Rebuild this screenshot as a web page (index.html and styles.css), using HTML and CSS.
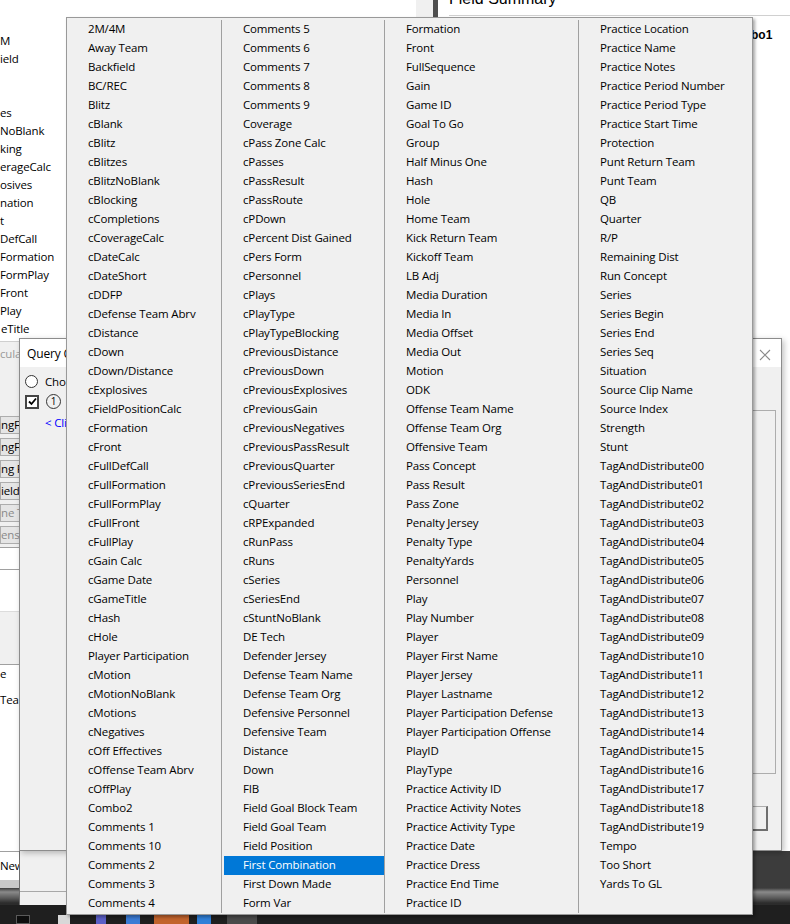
FILE: index.html
```html
<!DOCTYPE html>
<html>
<head>
<meta charset="utf-8">
<link rel="stylesheet" href="styles.css">
</head>
<body>
<div class="app">
  <div class="app-top">
    <div class="tab-grey"></div>
    <div class="tab-bar"></div>
    <div class="app-title"><span>Field Summary</span></div>
  </div>
  <div class="app-main">
    <div class="leftcol">
      <div class="bglist">
        <div>M</div><div>ield</div><div></div><div></div><div>es</div><div>NoBlank</div><div>king</div><div>erageCalc</div><div>osives</div><div>nation</div><div>t</div><div>DefCall</div><div>Formation</div><div>FormPlay</div><div>Front</div><div>Play</div><div class="cut">eTitle</div>
      </div>
      <div class="strip">
        <div class="calc">cula</div>
        <div class="fbtns">
          <div class="fbtn">ngFi</div>
          <div class="fbtn">ngFi</div>
          <div class="fbtn">ng F</div>
          <div class="fbtn">ields</div>
          <div class="fbtn dim">ne T</div>
          <div class="fbtn dim">ense</div>
        </div>
        <div class="sec white1"></div>
        <div class="sec white2"></div>
        <div class="sec grey1"></div>
        <div class="sec white3"><div class="t1">e</div><div class="t2">Tea</div></div>
      </div>
    </div>
    <div class="midcol"></div>
    <div class="rightcol"><span class="combo">bo1</span></div>
  </div>
</div>

<div class="lowstrip"><span>New</span></div>
<div class="lowpanel"></div>

<div class="dialog">
  <div class="dlg-title">
    <span>Query Calculation Builder</span>
    <svg class="dlg-close" width="12" height="12" viewBox="0 0 12 12"><path d="M1 1L11 11M11 1L1 11" stroke="#8a8a8a" stroke-width="1.1" fill="none"/></svg>
  </div>
  <div class="dlg-body">
    <div class="dlg-left">
      <div class="opt"><span class="radio"></span><span>Choose</span></div>
      <div class="opt"><span class="check"><svg width="9" height="9" viewBox="0 0 9 9"><path d="M1 4.5L3.5 7L8 1.5" stroke="#000" stroke-width="1.8" fill="none"/></svg></span><span class="circ">1</span></div>
      <div class="link">&lt; Click</div>
    </div>
    <div class="dlg-right">
      <div class="listbox"></div>
      <div class="okbtn"></div>
    </div>
  </div>
</div>

<div class="taskbar">
  <span class="ti i1"></span><span class="ti i2"></span><span class="ti i3"></span><span class="ti i4"></span><span class="ti i5"></span><span class="ti i6"></span><span class="ti i7"></span>
</div>

<div class="menu">
  <div class="mcol c1">
    <div class="mi">2M/4M</div><div class="mi">Away Team</div><div class="mi">Backfield</div><div class="mi">BC/REC</div><div class="mi">Blitz</div><div class="mi">cBlank</div><div class="mi">cBlitz</div><div class="mi">cBlitzes</div><div class="mi">cBlitzNoBlank</div><div class="mi">cBlocking</div><div class="mi">cCompletions</div><div class="mi">cCoverageCalc</div><div class="mi">cDateCalc</div><div class="mi">cDateShort</div><div class="mi">cDDFP</div><div class="mi">cDefense Team Abrv</div><div class="mi">cDistance</div><div class="mi">cDown</div><div class="mi">cDown/Distance</div><div class="mi">cExplosives</div><div class="mi">cFieldPositionCalc</div><div class="mi">cFormation</div><div class="mi">cFront</div><div class="mi">cFullDefCall</div><div class="mi">cFullFormation</div><div class="mi">cFullFormPlay</div><div class="mi">cFullFront</div><div class="mi">cFullPlay</div><div class="mi">cGain Calc</div><div class="mi">cGame Date</div><div class="mi">cGameTitle</div><div class="mi">cHash</div><div class="mi">cHole</div><div class="mi">Player Participation</div><div class="mi">cMotion</div><div class="mi">cMotionNoBlank</div><div class="mi">cMotions</div><div class="mi">cNegatives</div><div class="mi">cOff Effectives</div><div class="mi">cOffense Team Abrv</div><div class="mi">cOffPlay</div><div class="mi">Combo2</div><div class="mi">Comments 1</div><div class="mi">Comments 10</div><div class="mi">Comments 2</div><div class="mi">Comments 3</div><div class="mi">Comments 4</div>
  </div>
  <div class="mcol c2">
    <div class="mi">Comments 5</div><div class="mi">Comments 6</div><div class="mi">Comments 7</div><div class="mi">Comments 8</div><div class="mi">Comments 9</div><div class="mi">Coverage</div><div class="mi">cPass Zone Calc</div><div class="mi">cPasses</div><div class="mi">cPassResult</div><div class="mi">cPassRoute</div><div class="mi">cPDown</div><div class="mi">cPercent Dist Gained</div><div class="mi">cPers Form</div><div class="mi">cPersonnel</div><div class="mi">cPlays</div><div class="mi">cPlayType</div><div class="mi">cPlayTypeBlocking</div><div class="mi">cPreviousDistance</div><div class="mi">cPreviousDown</div><div class="mi">cPreviousExplosives</div><div class="mi">cPreviousGain</div><div class="mi">cPreviousNegatives</div><div class="mi">cPreviousPassResult</div><div class="mi">cPreviousQuarter</div><div class="mi">cPreviousSeriesEnd</div><div class="mi">cQuarter</div><div class="mi">cRPExpanded</div><div class="mi">cRunPass</div><div class="mi">cRuns</div><div class="mi">cSeries</div><div class="mi">cSeriesEnd</div><div class="mi">cStuntNoBlank</div><div class="mi">DE Tech</div><div class="mi">Defender Jersey</div><div class="mi">Defense Team Name</div><div class="mi">Defense Team Org</div><div class="mi">Defensive Personnel</div><div class="mi">Defensive Team</div><div class="mi">Distance</div><div class="mi">Down</div><div class="mi">FIB</div><div class="mi">Field Goal Block Team</div><div class="mi">Field Goal Team</div><div class="mi">Field Position</div><div class="mi sel">First Combination</div><div class="mi">First Down Made</div><div class="mi">Form Var</div>
  </div>
  <div class="mcol c3">
    <div class="mi">Formation</div><div class="mi">Front</div><div class="mi">FullSequence</div><div class="mi">Gain</div><div class="mi">Game ID</div><div class="mi">Goal To Go</div><div class="mi">Group</div><div class="mi">Half Minus One</div><div class="mi">Hash</div><div class="mi">Hole</div><div class="mi">Home Team</div><div class="mi">Kick Return Team</div><div class="mi">Kickoff Team</div><div class="mi">LB Adj</div><div class="mi">Media Duration</div><div class="mi">Media In</div><div class="mi">Media Offset</div><div class="mi">Media Out</div><div class="mi">Motion</div><div class="mi">ODK</div><div class="mi">Offense Team Name</div><div class="mi">Offense Team Org</div><div class="mi">Offensive Team</div><div class="mi">Pass Concept</div><div class="mi">Pass Result</div><div class="mi">Pass Zone</div><div class="mi">Penalty Jersey</div><div class="mi">Penalty Type</div><div class="mi">PenaltyYards</div><div class="mi">Personnel</div><div class="mi">Play</div><div class="mi">Play Number</div><div class="mi">Player</div><div class="mi">Player First Name</div><div class="mi">Player Jersey</div><div class="mi">Player Lastname</div><div class="mi">Player Participation Defense</div><div class="mi">Player Participation Offense</div><div class="mi">PlayID</div><div class="mi">PlayType</div><div class="mi">Practice Activity ID</div><div class="mi">Practice Activity Notes</div><div class="mi">Practice Activity Type</div><div class="mi">Practice Date</div><div class="mi">Practice Dress</div><div class="mi">Practice End Time</div><div class="mi">Practice ID</div>
  </div>
  <div class="mcol c4">
    <div class="mi">Practice Location</div><div class="mi">Practice Name</div><div class="mi">Practice Notes</div><div class="mi">Practice Period Number</div><div class="mi">Practice Period Type</div><div class="mi">Practice Start Time</div><div class="mi">Protection</div><div class="mi">Punt Return Team</div><div class="mi">Punt Team</div><div class="mi">QB</div><div class="mi">Quarter</div><div class="mi">R/P</div><div class="mi">Remaining Dist</div><div class="mi">Run Concept</div><div class="mi">Series</div><div class="mi">Series Begin</div><div class="mi">Series End</div><div class="mi">Series Seq</div><div class="mi">Situation</div><div class="mi">Source Clip Name</div><div class="mi">Source Index</div><div class="mi">Strength</div><div class="mi">Stunt</div><div class="mi">TagAndDistribute00</div><div class="mi">TagAndDistribute01</div><div class="mi">TagAndDistribute02</div><div class="mi">TagAndDistribute03</div><div class="mi">TagAndDistribute04</div><div class="mi">TagAndDistribute05</div><div class="mi">TagAndDistribute06</div><div class="mi">TagAndDistribute07</div><div class="mi">TagAndDistribute08</div><div class="mi">TagAndDistribute09</div><div class="mi">TagAndDistribute10</div><div class="mi">TagAndDistribute11</div><div class="mi">TagAndDistribute12</div><div class="mi">TagAndDistribute13</div><div class="mi">TagAndDistribute14</div><div class="mi">TagAndDistribute15</div><div class="mi">TagAndDistribute16</div><div class="mi">TagAndDistribute17</div><div class="mi">TagAndDistribute18</div><div class="mi">TagAndDistribute19</div><div class="mi">Tempo</div><div class="mi">Too Short</div><div class="mi">Yards To GL</div>
  </div>
</div>
</body>
</html>
```
FILE: styles.css
```css
html, body {
  margin: 0;
  padding: 0;
}
body {
  width: 790px;
  height: 924px;
  overflow: hidden;
  position: relative;
  font-family: "Open Sans", "Noto Sans", sans-serif;
  font-size: 11.5px;
  letter-spacing: -0.15px;
  color: #000;
  background: linear-gradient(to bottom, #3c3c3c 0, #3c3c3c 888px, #8a8a8a 892px, #5a5a5a 898px, #2c2c2c 903px, #2c2c2c 924px);
}

/* background application window */
.app {
  position: absolute;
  left: 0;
  top: 0;
  width: 790px;
  height: 851px;
  background: #fff;
  overflow: hidden;
}
.app-top {
  display: flex;
  height: 17px;
  padding-left: 416px;
}
.tab-grey {
  width: 17px;
  background: #f0f0f0;
}
.tab-bar {
  width: 5px;
  background: #4f4f4f;
}
.app-title {
  flex: 1;
  margin-left: 11px;
  height: 15px;
  border-bottom: 1px solid #d0d0d0;
  overflow: hidden;
  font-family: "Liberation Sans", sans-serif;
  font-size: 16px;
  letter-spacing: 0;
  line-height: 16px;
}
.app-title span {
  display: block;
  margin-top: -9px;
}
.app-main {
  display: flex;
}
.leftcol {
  width: 66px;
  overflow: hidden;
}
.bglist {
  margin-top: 15px;
  line-height: 17px;
  white-space: nowrap;
}
.bglist div {
  height: 18px;
}
.bglist .cut {
  margin-left: 1px;
}
.strip {
  width: 19px;
  overflow: hidden;
  white-space: nowrap;
}
.calc {
  margin-top: 3px;
  height: 23px;
  line-height: 23px;
  background: #f0f0f0;
  border-top: 1px solid #cfcfcf;
  color: #9a9a9a;
}
.fbtns {
  background: #f0f0f0;
  padding-top: 51px;
  padding-bottom: 3px;
  display: flex;
  flex-direction: column;
  gap: 4px;
}
.fbtn {
  height: 16px;
  line-height: 16px;
  border: 1px solid #adadad;
  border-right: none;
  background: #e5e5e5;
}
.fbtn.dim {
  color: #8a8a8a;
}
.sec {
  border-top: 1px solid #a0a0a0;
}
.white1 { height: 21px; }
.white2 { height: 41px; }
.grey1 { height: 52px; background: #f0f0f0; border-top-color: #dcdcdc; }
.white3 { height: 200px; line-height: 18px; }
.white3 .t1 { margin-top: 0; }
.white3 .t2 { margin-top: 8px; }
.midcol {
  flex: 1;
}
.rightcol {
  width: 37px;
  padding-top: 10px;
}
.combo {
  font-family: "Liberation Sans", sans-serif;
  font-weight: bold;
  font-size: 12px;
  letter-spacing: 0;
  margin-left: -2px;
}

.lowstrip {
  position: absolute;
  left: 0;
  top: 851px;
  width: 19px;
  height: 37px;
  box-sizing: border-box;
  border-top: 1px solid #a0a0a0;
  background: #fff;
  border-bottom: 8px solid #c8c8c8;
  overflow: hidden;
  white-space: nowrap;
  line-height: 28px;
}
.lowpanel {
  position: absolute;
  left: 19px;
  top: 851px;
  width: 120px;
  height: 64px;
  background: #f0f0f0;
  border-left: 1px solid #6d6d6d;
  box-sizing: border-box;
  background-image: linear-gradient(#a8a8a8, #a8a8a8);
  background-size: 100% 1px;
  background-position: 0 40px;
  background-repeat: no-repeat;
}

/* dialog window */
.dialog {
  position: absolute;
  left: 19px;
  top: 338px;
  width: 763px;
  height: 513px;
  box-sizing: border-box;
  border: 1px solid #8c8c8c;
  background: #f0f0f0;
  box-shadow: 2px 2px 6px rgba(0, 0, 0, 0.25);
  display: flex;
  flex-direction: column;
}
.dlg-title {
  height: 28px;
  background: #fff;
  display: flex;
  align-items: center;
  justify-content: space-between;
  padding: 0 10px 0 7px;
  flex: none;
  font-size: 12px;
}
.dlg-close {
  margin-top: 3px;
}
.dlg-body {
  flex: 1;
  display: flex;
}
.dlg-left {
  width: 260px;
  padding: 5px 0 0 5px;
}
.opt {
  display: flex;
  align-items: center;
  gap: 7px;
  height: 19px;
  margin-bottom: 1px;
  white-space: nowrap;
}
.radio {
  width: 11px;
  height: 11px;
  border: 1px solid #333;
  border-radius: 50%;
  background: #fff;
}
.check {
  width: 10px;
  height: 10px;
  border: 2px solid #444;
  background: #fff;
  display: flex;
  align-items: center;
  justify-content: center;
}
.circ {
  width: 13px;
  height: 13px;
  border: 1px solid #333;
  border-radius: 50%;
  font-size: 10px;
  line-height: 13px;
  text-align: center;
  margin-left: 0;
}
.link {
  color: #0000ff;
  padding-left: 20px;
  margin-top: 2px;
  line-height: 19px;
}
.dlg-right {
  flex: 1;
  display: flex;
  flex-direction: column;
  align-items: flex-end;
  padding-right: 5px;
}
.listbox {
  margin-top: 43px;
  width: 100%;
  height: 364px;
  border: 1px solid #adadad;
  box-sizing: border-box;
  background: #f0f0f0;
}
.okbtn {
  margin-top: 32px;
  margin-right: 8px;
  width: 75px;
  height: 25px;
  box-sizing: border-box;
  border: 1px solid #adadad;
  border-right: 2px solid #6e6e6e;
  border-bottom: 2px solid #6e6e6e;
  background: #f0f0f0;
}

/* taskbar */
.taskbar {
  position: absolute;
  left: 0;
  top: 905px;
  width: 790px;
  height: 19px;
  background: #1f1f1f;
  display: flex;
  align-items: flex-start;
  padding-top: 10px;
  box-sizing: border-box;
}
.ti {
  display: block;
  height: 9px;
}
.i1 { width: 14px; margin-left: 16px; background: #0e0e0e; border: 1px solid #5a5a5a; box-sizing: border-box; }
.i2 { width: 12px; margin-left: 28px; background: #d8d8d8; }
.i3 { width: 10px; margin-left: 26px; background: #5b5fc7; }
.i4 { width: 14px; margin-left: 20px; background: #3a7bd5; }
.i5 { width: 35px; margin-left: 14px; background: #c2632c; }
.i6 { width: 14px; margin-left: 8px; background: #2f7fd8; }
.i7 { width: 30px; margin-left: 16px; background: #4a4a4a; }

/* popup menu */
.menu {
  position: absolute;
  left: 66px;
  top: 17px;
  width: 687px;
  height: 898px;
  box-sizing: border-box;
  border: 1px solid #999;
  background: #f0f0f0;
  box-shadow: 2px 2px 3px rgba(0, 0, 0, 0.35);
  padding-top: 2px;
  display: flex;
  align-items: stretch;
}
.mcol {
  box-sizing: border-box;
  height: 893px;
}
.c1 { width: 154px; }
.c2 { width: 163px; border-left: 1px solid #a0a0a0; }
.c3 { width: 194px; border-left: 1px solid #a0a0a0; }
.c4 { flex: 1; border-left: 1px solid #a0a0a0; }
.mi {
  height: 19px;
  box-sizing: border-box;
  line-height: 17px;
  padding-bottom: 2px;
  padding-left: 19px;
  margin-left: 2px;
  white-space: nowrap;
}
.mi.sel {
  background: #0078d7;
  color: #fff;
}
```
